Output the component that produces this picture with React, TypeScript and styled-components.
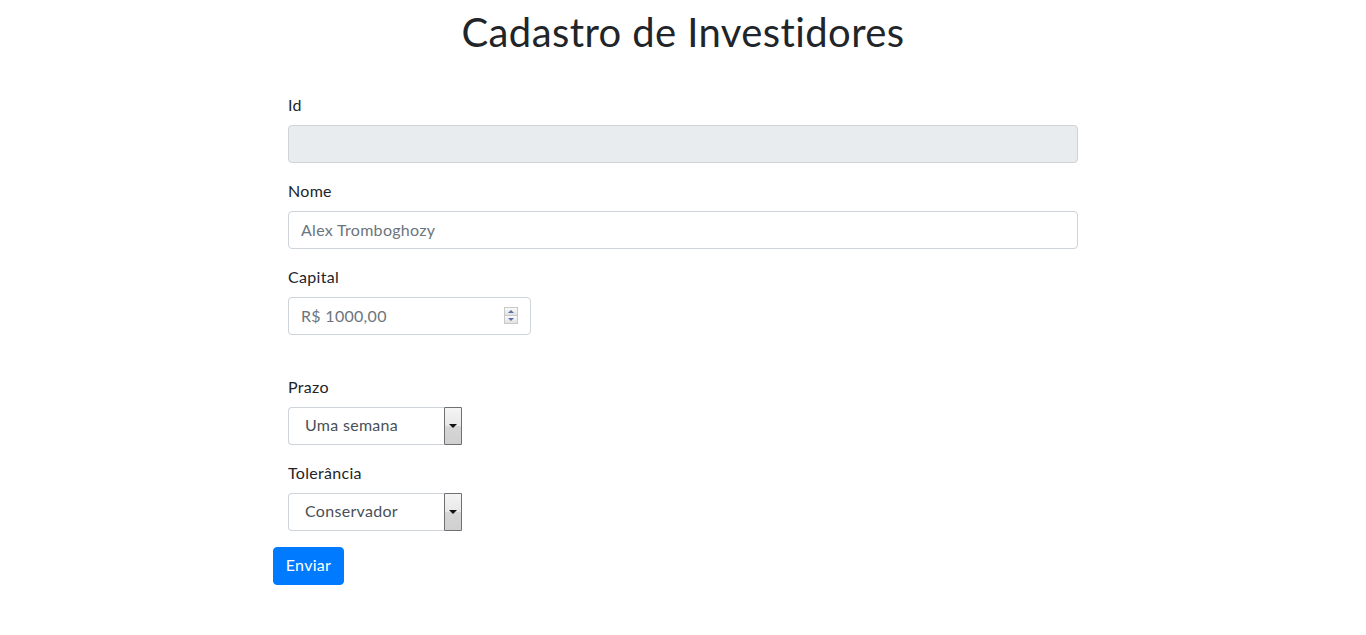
import React from "react";
import styled, { createGlobalStyle } from "styled-components";

const Global = createGlobalStyle`
  html, body { margin: 0; padding: 0; background: #fff; }
  body {
    font-family: Lato, "Noto Sans", sans-serif;
    color: #212529;
    font-size: 16px;
    line-height: 1.5;
    font-variant-ligatures: none;
    letter-spacing: 0.3px;
  }
  * { box-sizing: border-box; }
`;

const Page = styled.div`
  width: 1366px;
  display: flex;
  flex-direction: column;
  align-items: center;
`;

const Title = styled.h1`
  margin: 8px 0 0;
  font-size: 40px;
  font-weight: 400;
  line-height: 48px;
  letter-spacing: 0.4px;
  color: #212529;
`;

const Form = styled.form`
  width: 820px;
  margin-top: 37px;
  display: flex;
  flex-direction: column;
`;

const Col = styled.div`
  padding: 0 15px;
  display: flex;
  flex-direction: column;
`;

const Group = styled.div<{ $extra?: number }>`
  display: flex;
  flex-direction: column;
  margin-bottom: ${(p) => 16 + (p.$extra ?? 0)}px;
`;

const Label = styled.label`
  display: block;
  margin-bottom: 8px;
  font-size: 16px;
  line-height: 23px;
  padding-bottom: 1px;
  color: #212529;
`;

const Input = styled.input`
  height: 38px;
  width: 100%;
  padding: 5px 12px 7px;
  font-family: inherit;
  font-size: 16px;
  line-height: 24px;
  letter-spacing: 0.3px;
  color: #495057;
  background: #fff;
  border: 1px solid #ced4da;
  border-radius: 4px;
  outline: none;
  &::placeholder { color: #6c757d; }
  &:disabled { background: #e9ecef; }
`;

const NumberBox = styled.div`
  position: relative;
  width: 243px;
`;

const Spinner = styled.div`
  position: absolute;
  right: 13px;
  top: 10px;
  width: 14px;
  height: 17px;
  display: flex;
  flex-direction: column;
  border: 1px solid #c8c8c8;
  background: #eaeaea;
`;

const SpinHalf = styled.div<{ $down?: boolean }>`
  flex: 1;
  display: flex;
  align-items: center;
  justify-content: center;
  background: linear-gradient(#fafafa, #e2e2e2);
  border-top: ${(p) => (p.$down ? "1px solid #c8c8c8" : "none")};
  &::after {
    content: "";
    width: 0;
    height: 0;
    border-left: 3px solid transparent;
    border-right: 3px solid transparent;
    ${(p) => (p.$down ? "border-top: 3px solid #5a6fa8;" : "border-bottom: 3px solid #5a6fa8;")}
  }
`;

const SelectBox = styled.div`
  width: 174px;
  height: 38px;
  display: flex;
  align-items: stretch;
  border: 1px solid #ced4da;
  border-right: none;
  border-radius: 4px 0 0 4px;
  background: #fff;
  cursor: default;
`;

const SelectText = styled.span`
  flex: 1;
  padding: 5px 0 7px 16px;
  font-size: 16px;
  line-height: 24px;
  color: #495057;
`;

const SelectArrow = styled.span`
  width: 18px;
  margin-top: -1px;
  margin-bottom: -1px;
  display: flex;
  align-items: center;
  justify-content: center;
  border: 1px solid #707070;
  border-radius: 1px;
  background: linear-gradient(#f4f4f4 0%, #e8e8e8 50%, #d6d6d6 51%, #d0d0d0 100%);
  &::after {
    content: "";
    width: 0;
    height: 0;
    border-left: 4px solid transparent;
    border-right: 4px solid transparent;
    border-top: 4px solid #111;
  }
`;

const Button = styled.button`
  align-self: flex-start;
  width: 71px;
  height: 38px;
  padding: 5px 0 7px;
  font-family: inherit;
  font-size: 16px;
  line-height: 24px;
  letter-spacing: 0.3px;
  color: #fff;
  background: #007bff;
  border: 1px solid #007bff;
  border-radius: 4px;
`;

function Select({ value }: { value: string }) {
  return (
    <SelectBox>
      <SelectText>{value}</SelectText>
      <SelectArrow />
    </SelectBox>
  );
}

export default function App() {
  return (
    <>
      <Global />
      <Page>
        <Title>Cadastro de Investidores</Title>
        <Form onSubmit={(e) => e.preventDefault()}>
          <Col>
            <Group>
              <Label>Id</Label>
              <Input disabled />
            </Group>
            <Group>
              <Label>Nome</Label>
              <Input placeholder="Alex Tromboghozy" />
            </Group>
            <Group $extra={24}>
              <Label>Capital</Label>
              <NumberBox>
                <Input placeholder="R$ 1000,00" />
                <Spinner>
                  <SpinHalf />
                  <SpinHalf $down />
                </Spinner>
              </NumberBox>
            </Group>
            <Group>
              <Label>Prazo</Label>
              <Select value="Uma semana" />
            </Group>
            <Group>
              <Label>Tolerância</Label>
              <Select value="Conservador" />
            </Group>
          </Col>
          <Button type="submit">Enviar</Button>
        </Form>
      </Page>
    </>
  );
}
